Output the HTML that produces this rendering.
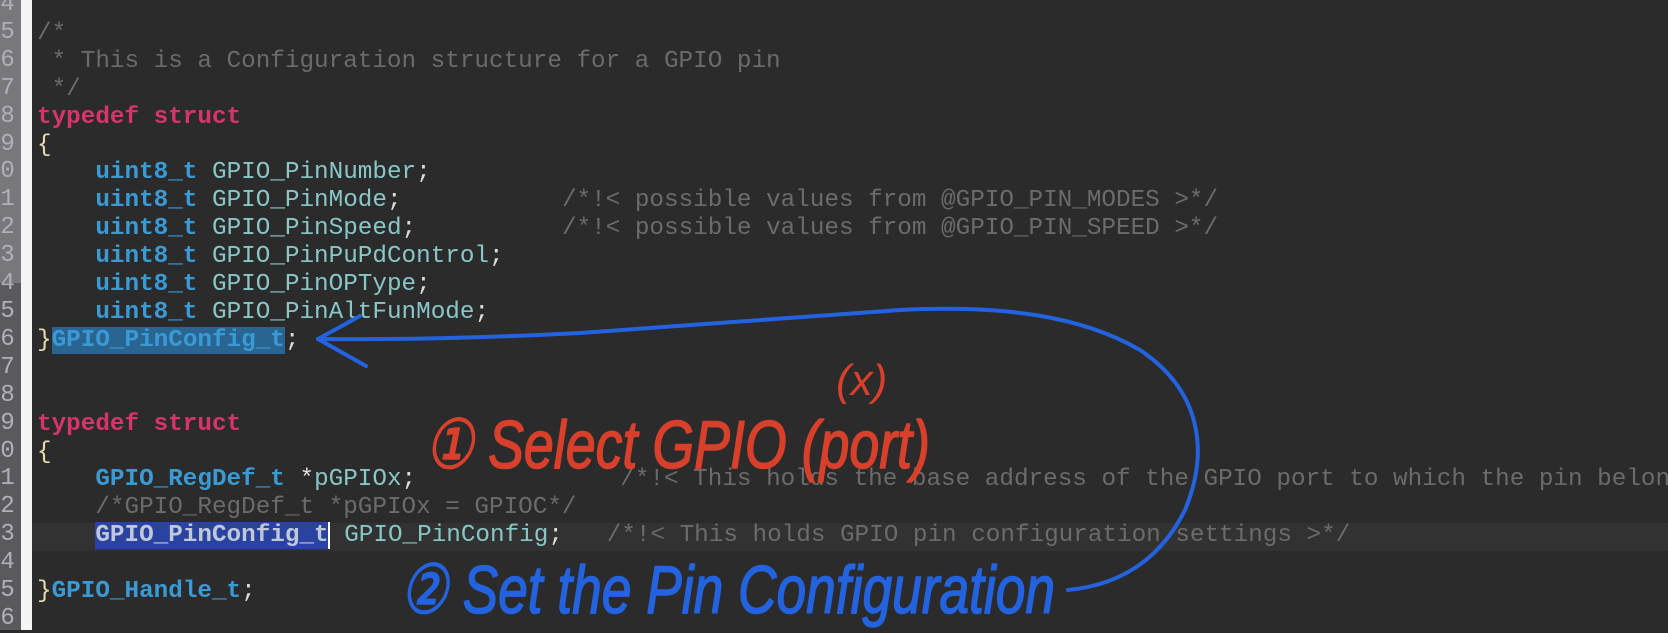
<!DOCTYPE html>
<html><head><meta charset="utf-8"><style>
html,body{margin:0;padding:0;}
body{width:1668px;height:630px;overflow:hidden;background:#2b2b2b;position:relative;font-family:"Liberation Mono",monospace;}
#gut{position:absolute;left:0;top:0;width:21px;height:630px;background:#5a5a5e;}
#gut2{position:absolute;left:0;top:0;width:21px;height:283px;background:#77777c;}
#strip{position:absolute;left:21px;top:0;width:11px;height:630px;background:#f4f4f4;}
#nums{position:absolute;left:-14px;top:-9px;font-size:24px;line-height:27.9px;color:#b0b0b8;}
#code{position:absolute;left:37px;top:-8px;width:1631px;overflow:hidden;font-size:24.3px;line-height:27.9px;white-space:pre;color:#89c7c7;}
.k{color:#d8346a;font-weight:bold}
.t{color:#3a9ad6;font-weight:bold}
.c{color:#6b6b6b}
.b{color:#e8dcae}
.w{color:#dcdcdc}
.sel1{background:#2a6592}
.sel2{background:#2a43a0;color:#bfc8d8}
#cur{position:absolute;left:32px;top:523px;width:1636px;height:28px;background:#323232;}
</style></head><body>
<div id="gut"></div><div id="gut2"></div>
<div id="cur"></div>
<div id="nums">14<br>15<br>16<br>17<br>18<br>19<br>20<br>21<br>22<br>23<br>24<br>25<br>26<br>27<br>28<br>29<br>30<br>31<br>32<br>33<br>34<br>35<br>36</div>
<div id="strip"></div>
<div id="code"> 
<span class="c">/*</span>
<span class="c"> * This is a Configuration structure for a GPIO pin</span>
<span class="c"> */</span>
<span class="k">typedef struct</span>
<span class="b">{</span>
    <span class="t">uint8_t</span> GPIO_PinNumber<span class="w">;</span>
    <span class="t">uint8_t</span> GPIO_PinMode<span class="w">;</span>           <span class="c">/*!&lt; possible values from @GPIO_PIN_MODES &gt;*/</span>
    <span class="t">uint8_t</span> GPIO_PinSpeed<span class="w">;</span>          <span class="c">/*!&lt; possible values from @GPIO_PIN_SPEED &gt;*/</span>
    <span class="t">uint8_t</span> GPIO_PinPuPdControl<span class="w">;</span>
    <span class="t">uint8_t</span> GPIO_PinOPType<span class="w">;</span>
    <span class="t">uint8_t</span> GPIO_PinAltFunMode<span class="w">;</span>
<span class="b">}</span><span class="t sel1">GPIO_PinConfig_t</span><span class="w">;</span>


<span class="k">typedef struct</span>
<span class="b">{</span>
    <span class="t">GPIO_RegDef_t</span> <span class="w">*</span>pGPIOx<span class="w">;</span>              <span class="c">/*!&lt; This holds the base address of the GPIO port to which the pin belongs &gt;*/</span>
    <span class="c">/*GPIO_RegDef_t *pGPIOx = GPIOC*/</span>
    <span class="sel2" style="font-weight:bold">GPIO_PinConfig_t</span><span style="border-left:2px solid #fff;margin-left:-1px"></span> GPIO_PinConfig<span class="w">;</span>   <span class="c">/*!&lt; This holds GPIO pin configuration settings &gt;*/</span>

<span class="b">}</span><span class="t">GPIO_Handle_t</span><span class="w">;</span>
</div>
<svg width="1668" height="630" style="position:absolute;left:0;top:0" fill="none" stroke-linecap="round" stroke-linejoin="round">
<g stroke="#2463e0" stroke-width="4">
<path d="M318,339 C420,340 520,336 580,333 C700,325 800,318 900,310 C1000,305 1080,315 1140,350 C1200,390 1210,450 1185,510 C1160,560 1120,585 1068,590"/>
<path d="M360,316 L318,339 L366,366"/>
</g>
<g font-family="'Liberation Sans Narrow','Liberation Sans',sans-serif" font-style="italic">
<text x="425" y="468" font-size="68" fill="#d8402c" stroke="#d8402c" stroke-width="1.5" textLength="505" lengthAdjust="spacingAndGlyphs">① Select GPIO (port)</text>
<text x="836" y="395" font-size="44" fill="#d8402c">(x)</text>
<text x="400" y="613" font-size="68" fill="#2463e0" stroke="#2463e0" stroke-width="1.5" textLength="655" lengthAdjust="spacingAndGlyphs">② Set the Pin Configuration</text>
</g>
</svg>
</body></html>
